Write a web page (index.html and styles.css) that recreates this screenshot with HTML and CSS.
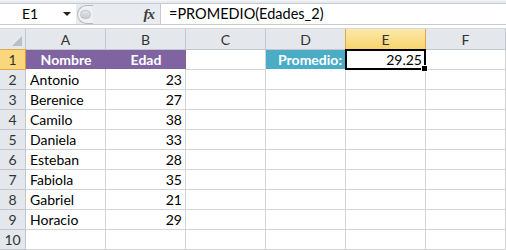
FILE: index.html
```html
<!DOCTYPE html>
<html lang="es">
<head>
<meta charset="utf-8">
<title>Excel PROMEDIO</title>
<link rel="stylesheet" href="styles.css">
</head>
<body>
<div class="app">
  <div class="topline"></div>
  <div class="fbar">
    <div class="namebox">
      <span class="name">E1</span>
      <span class="arrow"></span>
    </div>
    <div class="splitter"><span class="knob"></span></div>
    <div class="fxarea"><span class="fx">fx</span></div>
    <div class="formula">=PROMEDIO(Edades_2)</div>
  </div>
  <div class="strip"></div>
  <div class="grid">
    <div class="hd corner"><svg class="tri" width="10" height="10" viewBox="0 0 10 10"><polygon points="10,0 10,10 0,10" fill="#b9bfc7"/></svg></div>
    <div class="hd col">A</div>
    <div class="hd col">B</div>
    <div class="hd col">C</div>
    <div class="hd col">D</div>
    <div class="hd col sel">E</div>
    <div class="hd col">F</div>

    <div class="hd row sel">1</div>
    <div class="c th purple center">Nombre</div>
    <div class="c th purple center">Edad</div>
    <div class="c"></div>
    <div class="c th teal right">Promedio:</div>
    <div class="c right active">29.25<span class="handle"></span></div>
    <div class="c"></div>

    <div class="hd row">2</div><div class="c">Antonio</div><div class="c right">23</div><div class="c"></div><div class="c"></div><div class="c"></div><div class="c"></div>
    <div class="hd row">3</div><div class="c">Berenice</div><div class="c right">27</div><div class="c"></div><div class="c"></div><div class="c"></div><div class="c"></div>
    <div class="hd row">4</div><div class="c">Camilo</div><div class="c right">38</div><div class="c"></div><div class="c"></div><div class="c"></div><div class="c"></div>
    <div class="hd row">5</div><div class="c">Daniela</div><div class="c right">33</div><div class="c"></div><div class="c"></div><div class="c"></div><div class="c"></div>
    <div class="hd row">6</div><div class="c">Esteban</div><div class="c right">28</div><div class="c"></div><div class="c"></div><div class="c"></div><div class="c"></div>
    <div class="hd row">7</div><div class="c">Fabiola</div><div class="c right">35</div><div class="c"></div><div class="c"></div><div class="c"></div><div class="c"></div>
    <div class="hd row">8</div><div class="c">Gabriel</div><div class="c right">21</div><div class="c"></div><div class="c"></div><div class="c"></div><div class="c"></div>
    <div class="hd row">9</div><div class="c">Horacio</div><div class="c right">29</div><div class="c"></div><div class="c"></div><div class="c"></div><div class="c"></div>
    <div class="hd row">10</div><div class="c"></div><div class="c"></div><div class="c"></div><div class="c"></div><div class="c"></div><div class="c"></div>
  </div>
</div>
</body>
</html>
```

FILE: styles.css
```css
* { box-sizing: border-box; }
html, body { margin: 0; padding: 0; background: #ffffff; }
body {
  width: 506px;
  height: 250px;
  overflow: hidden;
  font-family: Lato, "Liberation Sans", sans-serif;
  font-size: 14px;
  color: #000;
}
.app { width: 506px; }
.topline {
  height: 4px;
  background: #e8ebef;
  border-top: 1px solid #f4f5f7;
  border-bottom: 1px solid #c7cbd1;
}
.fbar {
  display: flex;
  height: 21px;
  background: #e8ebef;
  border-bottom: 1px solid #c7cbd1;
}
.namebox {
  width: 76px;
  background: #fff;
  display: flex;
  align-items: center;
}
.namebox .name {
  width: 60px;
  text-align: center;
  line-height: 20px;
}
.namebox .arrow {
  width: 0; height: 0;
  border-left: 4px solid transparent;
  border-right: 4px solid transparent;
  border-top: 4px solid #222;
  margin-left: 3px;
}
.splitter {
  width: 17px;
  display: flex;
  align-items: center;
  justify-content: flex-start;
}
.splitter .knob {
  width: 17px;
  height: 19px;
  border-radius: 10px 0 0 10px;
  border: 1px solid #b4b9c1;
  border-right: none;
  background: #eef0f3;
  display: flex;
  align-items: center;
  justify-content: center;
  margin-left: 1px;
}
.splitter .knob::before {
  content: "";
  width: 9px;
  height: 7px;
  border-radius: 5px;
  background: linear-gradient(#e4e7ea, #c6cad0);
  border: 1px solid #bfc3c9;
}
.fxarea {
  width: 68px;
  display: flex;
  align-items: center;
  justify-content: flex-end;
  padding-right: 6px;
  border-right: 1px solid #c7cbd1;
}
.fx {
  font-family: "Liberation Serif", "DejaVu Serif", serif;
  font-style: italic;
  font-weight: bold;
  font-size: 15px;
  color: #3c3c3c;
  letter-spacing: -1px;
}
.formula {
  flex: 1;
  background: #fff;
  padding-left: 8px;
  line-height: 20px;
  font-size: 14.5px;
}
.strip {
  height: 4px;
  background: #fff;
  border-bottom: 1px solid #d5d9de;
}
.grid {
  display: grid;
  grid-template-columns: 26px repeat(6, 80px);
  grid-template-rows: 21px repeat(10, 20px);
}
.hd {
  background: #e4e7eb;
  color: #333;
  border-right: 1px solid #c3c7cd;
  border-bottom: 1px solid #c3c7cd;
  display: flex;
  align-items: center;
  justify-content: center;
  line-height: 1;
}
.hd.col { padding-top: 1px; }
.hd.corner {
  align-items: flex-end;
  justify-content: flex-end;
  padding: 0 3px 3px 0;
}
.hd.col.sel {
  background: linear-gradient(#fde9a9, #f9d46f);
  border-right-color: #e2a748;
  border-bottom-color: #e09b32;
  border-left: 1px solid #e2a748;
  margin-left: -1px;
}
.hd.row.sel {
  background: #f9d77c;
  border-right-color: #e09b32;
  border-bottom-color: #e2a748;
  border-top: 1px solid #e2a748;
  margin-top: -1px;
}
.c {
  border-right: 1px solid #d4d4d4;
  border-bottom: 1px solid #d4d4d4;
  padding: 1px 3px 0 4px;
  display: flex;
  align-items: center;
  white-space: nowrap;
  line-height: 1;
}
.c.right { justify-content: flex-end; }
.c.center { justify-content: center; }
.c.th { color: #fff; font-weight: bold; }
.c.purple { background: #8064a2; border-right-color: #8064a2; border-bottom-color: #ffffff; }
.c.teal { background: #4bacc6; border-right-color: #8a5144; border-bottom-color: #ffffff; }
.c.active { position: relative; }
.c.active::after {
  content: "";
  position: absolute;
  left: -1px; top: -1px; right: -1px; bottom: -1px;
  border: 2px solid #000;
  pointer-events: none;
}
.handle {
  position: absolute;
  right: -3px;
  bottom: -3px;
  width: 5px;
  height: 5px;
  background: #000;
  border: 1px solid #fff;
  box-sizing: content-box;
  z-index: 2;
}
```
